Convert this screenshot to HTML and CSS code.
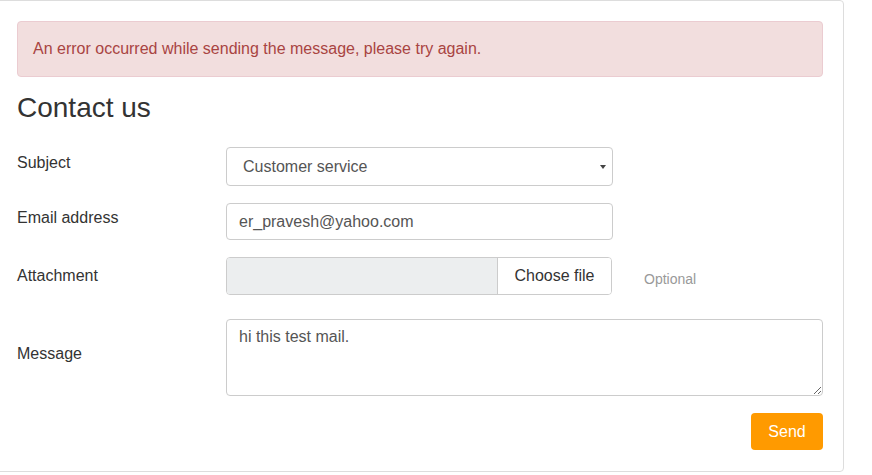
FILE: index.html
```html
<!DOCTYPE html>
<html lang="en">
<head>
<meta charset="utf-8">
<title>Contact us</title>
<link rel="stylesheet" href="styles.css">
</head>
<body>
<div class="panel">
  <div class="alert">An error occurred while sending the message, please try again.</div>
  <h1 class="title">Contact us</h1>
  <form class="form">
    <div class="row">
      <label class="row-label lbl-subject">Subject</label>
      <div class="control select-wrap">
        <select class="select">
          <option>Customer service</option>
        </select>
      </div>
    </div>
    <div class="row">
      <label class="row-label lbl-email">Email address</label>
      <input class="control input" type="text" value="er_pravesh@yahoo.com">
    </div>
    <div class="row row-file">
      <label class="row-label lbl-file">Attachment</label>
      <div class="control file-field">
        <div class="file-name"></div>
        <div class="file-btn">Choose file</div>
      </div>
      <span class="hint">Optional</span>
    </div>
    <div class="row">
      <label class="row-label lbl-message">Message</label>
      <textarea class="textarea">hi this test mail.</textarea>
    </div>
    <div class="row row-actions">
      <button type="button" class="btn-send">Send</button>
    </div>
  </form>
</div>
</body>
</html>
```
FILE: styles.css
```css
* { box-sizing: border-box; }

body {
  margin: 0;
  background: #fff;
  font-family: "Liberation Sans", Arial, sans-serif;
  font-size: 16px;
  color: #333;
}

.panel {
  margin-left: -4px;
  width: 848px;
  height: 472px;
  border: 1px solid #ddd;
  border-radius: 4px;
  padding: 20px;
}

.alert {
  padding: 15px;
  line-height: 24px;
  background: #f2dede;
  border: 1px solid #ebccd1;
  border-radius: 4px;
  color: #a94442;
}

.title {
  margin: 15px 0 0;
  font-size: 28px;
  font-weight: normal;
  line-height: 31px;
  color: #333;
}

.form {
  margin-top: 24px;
  display: flex;
  flex-direction: column;
  gap: 17px;
}

.row {
  display: flex;
  align-items: flex-start;
}

.row-label {
  width: 209px;
  flex: none;
  line-height: 18px;
}

.lbl-subject { padding-top: 7px; }
.lbl-email { padding-top: 6px; }
.lbl-file { padding-top: 10px; }
.lbl-message { padding-top: 26px; }

.control {
  width: 387px;
  flex: none;
}

.select-wrap {
  position: relative;
}

.select-wrap::after {
  content: "";
  position: absolute;
  right: 7px;
  top: 18px;
  border-left: 3px solid transparent;
  border-right: 3px solid transparent;
  border-top: 4px solid #444;
  pointer-events: none;
}

.select {
  appearance: none;
  -webkit-appearance: none;
  display: block;
  width: 100%;
  height: 39px;
  padding: 0 24px 0 16px;
  border: 1px solid #ccc;
  border-radius: 4px;
  background: #fff;
  font: inherit;
  color: #555;
}

.input {
  height: 37px;
  padding: 0 12px;
  border: 1px solid #ccc;
  border-radius: 4px;
  font: inherit;
  color: #555;
  background: #fff;
}

.row-file {
  margin-bottom: 7px;
  align-items: flex-start;
}

.file-field {
  display: flex;
  height: 38px;
  width: 386px;
  border: 1px solid #ccc;
  border-radius: 4px;
  overflow: hidden;
}

.file-name {
  flex: 1;
  background: #eceeef;
}

.file-btn {
  width: 114px;
  flex: none;
  border-left: 1px solid #ccc;
  background: #fff;
  color: #333;
  display: flex;
  align-items: center;
  justify-content: center;
}

.hint {
  margin-left: 32px;
  font-size: 14px;
  color: #999;
  line-height: 18px;
  padding-top: 13px;
}

.textarea {
  width: 597px;
  height: 77px;
  padding: 7px 12px 6px;
  border: 1px solid #ccc;
  border-radius: 4px;
  font: inherit;
  line-height: 20px;
  color: #555;
  resize: vertical;
}

.row-actions {
  justify-content: flex-end;
}

.btn-send {
  width: 72px;
  height: 37px;
  border: none;
  border-radius: 4px;
  background: #ff9a00;
  color: #fff;
  font: inherit;
  padding: 0;
}
```
